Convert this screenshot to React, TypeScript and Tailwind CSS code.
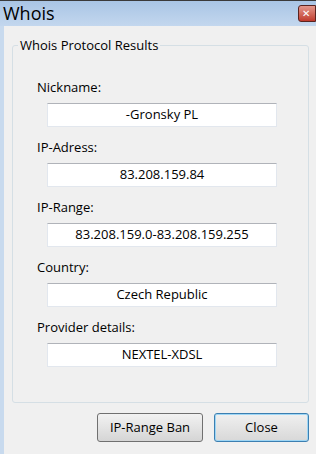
const FIELDS = [
  { label: 'Nickname:', value: '-Gronsky PL' },
  { label: 'IP-Adress:', value: '83.208.159.84' },
  { label: 'IP-Range:', value: '83.208.159.0-83.208.159.255' },
  { label: 'Country:', value: 'Czech Republic' },
  { label: 'Provider details:', value: 'NEXTEL-XDSL' },
];

export default function App() {
  return (
    <div className="w-[316px] h-[454px] overflow-hidden flex flex-col text-black font-['Open_Sans','Noto_Sans',sans-serif]">
      {/* Title bar */}
      <div className="h-[26px] shrink-0 flex items-start border-t border-[#3a3a3a] bg-gradient-to-b from-[#a9c5e5] to-[#c3d7ee]">
        <span className="pl-[3px] pt-[1px] text-[18px] leading-[22px]">Whois</span>
        <div className="ml-auto mt-[4px] w-[18px] h-[17px] shrink-0 rounded-l-[3px] border border-[#5a2420] bg-gradient-to-b from-[#e3978c] to-[#c0392d] flex items-center pl-[3px]">
          <span className="text-white text-[10px] leading-none font-bold font-['DejaVu_Sans',sans-serif]">✕</span>
        </div>
      </div>

      {/* Body */}
      <div className="flex-1 flex flex-col bg-[#f0f0f0] border-l-[4px] border-[#c8daee]">
        <fieldset className="mt-[12px] ml-[8px] w-[297px] h-[365px] rounded-[3px] border border-[#d5dfe5] p-0 m-0">
          <legend className="ml-[5px] px-[2px] text-[13px] leading-[15px]">Whois Protocol Results</legend>
          <div className="pt-[26px] pl-[24px] flex flex-col gap-[12px]">
            {FIELDS.map((f) => (
              <div key={f.label} className="flex flex-col">
                <span className="text-[13px] leading-[16px] mb-[8px]">{f.label}</span>
                <div className="ml-[10px] w-[230px] h-[24px] bg-white border border-[#e2e7ee] border-t-[#b0b3b9] flex items-center justify-center text-[13px]">
                  {f.value}
                </div>
              </div>
            ))}
          </div>
        </fieldset>

        {/* Buttons */}
        <div className="mt-[10px] flex justify-end gap-[11px] pr-[7px]">
          <button className="w-[106px] h-[29px] rounded-[3px] border border-[#707070] bg-gradient-to-b from-[#f2f2f2] to-[#d5d5d5] text-[13px]">
            IP-Range Ban
          </button>
          <button className="w-[95px] h-[29px] rounded-[3px] border border-[#3c7fb1] shadow-[inset_0_0_0_1px_#9ed6f5] bg-gradient-to-b from-[#f0f0f0] to-[#d8d8d8] text-[13px]">
            Close
          </button>
        </div>
      </div>
    </div>
  );
}
